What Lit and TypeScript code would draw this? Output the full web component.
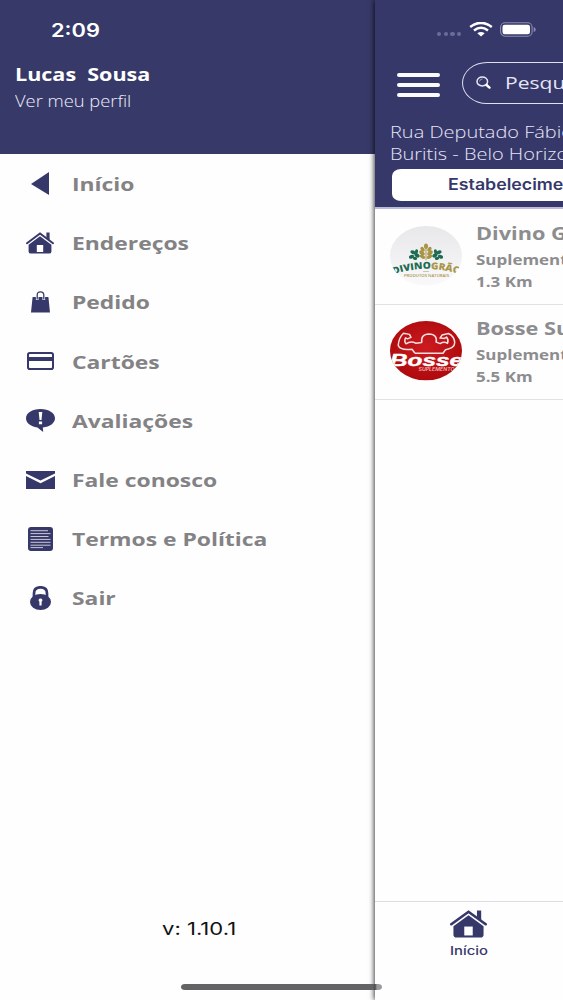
import { LitElement, html, css, svg } from "lit";
import { customElement } from "lit/decorators.js";

const house = html`<svg class="house" viewBox="0 0 28 22" preserveAspectRatio="none">
  <path d="M20.4 .4h3.200v8.500l-3.200-2.800z" fill="#37386a" />
  <path d="M1 11.2 14 1.4 27 11.2" fill="none" stroke="#37386a" stroke-width="2" stroke-linecap="round" />
  <path d="M14 4.2 25.4 12.8V19.4q0 2.2-2.4 2.2H5q-2.4 0-2.4-2.2V12.8z" fill="#37386a" />
  <path d="M10.8 13h6.4v7h-6.4z" fill="#fff" />
</svg>`;

const icons = {
  back: html`<svg class="i-back" viewBox="0 0 18 23"><path d="M18 0v23L0 12z" /></svg>`,
  bag: html`<svg class="i-bag" viewBox="0 0 19 22">
    <path d="M1.6 6h15.8L19 21.6H0z" />
    <path d="M6.2 9V4.2q0-3.4 3.3-3.4t3.3 3.4V9" fill="none" stroke="#fff" stroke-width="2.6" />
    <path d="M6.2 8.6V4.2q0-3.4 3.3-3.4t3.3 3.4V8.6" fill="none" stroke="#37386a" stroke-width="1.3" />
  </svg>`,
  card: html`<svg class="i-card" viewBox="0 0 27 18">
    <rect x="1" y="1" width="25" height="16" rx="1.8" fill="none" stroke="#37386a" stroke-width="2" />
    <path d="M1 5h25v4H1z" />
  </svg>`,
  bubble: html`<svg class="i-bubble" viewBox="0 0 29 23">
    <path d="M14.5 0C22.8 0 29 4 29 9.3c0 4.800-5 8.500-12.200 9.200L17.200 23 11.400 18.400C4.500 17.600 0 14 0 9.300 0 4 6.200 0 14.500 0z" />
    <path d="M12.700 3h3.600l-.8 8h-2zM12.900 12.500h3.200v2.700h-3.200z" fill="#fff" />
  </svg>`,
  mail: html`<svg class="i-mail" viewBox="0 0 29 18">
    <path d="M0 0h29v2.600L14.500 9.600 0 2.600z" />
    <path d="M0 5l14.500 7.200L29 5v13H0z" />
  </svg>`,
  doc: html`<svg class="i-doc" viewBox="0 0 25 24">
    <rect width="25" height="24" rx="3" />
    <path d="M2.500 3.700h17.500M2.500 6.600h20M2.500 9.500h18M2.500 12.400h20M2.500 15.300h20M2.500 18.200h20M2.500 20.600h12.500" stroke="#fff" stroke-opacity=".72" stroke-width="1" />
  </svg>`,
  lock: html`<svg class="i-lock" viewBox="0 0 21 24">
    <path d="M4 12V7.200Q4 1.300 10.500 1.300T17 7.200V12" fill="none" stroke="#37386a" stroke-width="2.700" />
    <ellipse cx="10.500" cy="16" rx="10.500" ry="8" />
    <path d="M10.500 12.600a1.900 1.700 0 0 1 1.100 3.100v3.700H9.400v-3.700a1.900 1.700 0 0 1 1.100-3.100z" fill="#fff" />
  </svg>`,
};

const menu = [
  { icon: icons.back, label: "Início" },
  { icon: house, label: "Endereços" },
  { icon: icons.bag, label: "Pedido" },
  { icon: icons.card, label: "Cartões" },
  { icon: icons.bubble, label: "Avaliações" },
  { icon: icons.mail, label: "Fale conosco" },
  { icon: icons.doc, label: "Termos e Política" },
  { icon: icons.lock, label: "Sair" },
];

const leaf = (x: number, y: number, a: number, rx = 2.4, ry = 1.6) =>
  svg`<ellipse cx=${x} cy=${y} rx=${rx} ry=${ry} transform="rotate(${a} ${x} ${y})" />`;

const divinoLogo = html`<svg class="avatar" viewBox="0 0 72 60" preserveAspectRatio="none">
  <defs>
    <clipPath id="dc"><ellipse cx="36" cy="30" rx="36" ry="30" /></clipPath>
    <linearGradient id="dg" x1="0" y1="0" x2="0" y2="1"><stop offset="0" stop-color="#e8e8eb" /><stop offset="1" stop-color="#f9f9fb" /></linearGradient>
  </defs>
  <g clip-path="url(#dc)">
    <rect width="72" height="60" fill="url(#dg)" />
    <g fill="#a99546">
      ${leaf(36, 20.500, 90, 2.8, 2)}
      ${leaf(32.600, 23.500, 50, 2.700, 1.800)}${leaf(39.400, 23.500, -50, 2.700, 1.800)}
      ${leaf(32, 27.200, 40, 3.200, 1.900)}${leaf(40, 27.200, -40, 3.200, 1.900)}
      ${leaf(32.400, 31, 30, 3, 1.700)}${leaf(39.600, 31, -30, 3, 1.700)}
      <path d="M35.500 22h1v12.500h-1z" />
    </g>
    <g fill="#1d6b52">
      ${leaf(23, 26.500, 20, 2.700, 1.900)}${leaf(26.500, 25.800, 100)}${leaf(21.500, 31, -20, 2.700, 1.800)}${leaf(27, 29.600, 35, 2.8, 1.900)}${leaf(25, 32.600, 10, 2.200)}
      ${leaf(49, 26.500, -20, 2.700, 1.900)}${leaf(45.500, 25.800, 80)}${leaf(50.500, 31, 20, 2.700, 1.800)}${leaf(45, 29.600, -35, 2.8, 1.900)}${leaf(47, 32.600, -10, 2.200)}
    </g>
    <path id="arc" d="M3.500 49Q36 37.500 70.500 49" fill="none" />
    <text font-family="Open Sans, sans-serif" font-weight="800" font-size="9.600" fill="#1d6b52"><textPath href="#arc" textLength="66" lengthAdjust="spacingAndGlyphs">DIVINO<tspan fill="#a99546">GRÃC</tspan></textPath></text>
    <path d="M33 45.900h6" stroke="#b9b08a" stroke-width=".7" />
    <text x="14" y="51.200" textLength="45" lengthAdjust="spacingAndGlyphs" font-family="Open Sans, sans-serif" font-weight="600" font-size="3.300" fill="#a99546">PRODUTOS NATURAIS</text>
  </g>
</svg>`;

const bosseLogo = html`<svg class="avatar" viewBox="0 0 72 60" preserveAspectRatio="none">
  <defs>
    <clipPath id="bc"><ellipse cx="36" cy="30" rx="36" ry="30" /></clipPath>
    <radialGradient id="bg" cx=".5" cy=".45" r=".55"><stop offset="0" stop-color="#cc1b20" /><stop offset="1" stop-color="#ae0a0d" /></radialGradient>
  </defs>
  <g clip-path="url(#bc)">
    <rect width="72" height="60" fill="url(#bg)" />
    <path d="M25 32.500H53L55.500 29Q64.500 27.500 64.700 22 64.500 15.500 58.500 12.600L52 14.200 50 17.200 54.500 17.600 56.500 16.200Q59 19.500 57.500 22.600 54 20.400 50.200 22.800L46.800 21.500M25 32.500 22 28.500Q10 30 8.200 24.500 9 16.500 13.500 12.400L19.500 13.500 21 16.500 17.500 18 15.500 17Q14 21 16 23 21 19.500 26 22.500L31.800 21.600M31.800 22Q30.500 13.300 39 13.100 47.600 13.300 46.200 22" fill="none" stroke="#f6e0e0" stroke-width="1.500" stroke-linejoin="round" />
    <text x="0" y="45.800" textLength="73" lengthAdjust="spacingAndGlyphs" font-family="Liberation Sans, sans-serif" font-weight="700" font-style="italic" font-size="16.500" fill="#fff" stroke="#fff" stroke-width=".4">Bosse</text>
    <text x="28.500" y="50.800" textLength="36" lengthAdjust="spacingAndGlyphs" font-family="Inter, sans-serif" font-weight="600" font-style="italic" font-size="4.400" fill="#f0b8b8">SUPLEMENTO</text>
  </g>
</svg>`;

const stores = [
  { logo: divinoLogo, name: "Divino Grão", kind: "Suplementos", distance: "1.3 Km" },
  { logo: bosseLogo, name: "Bosse Suplementos", kind: "Suplementos", distance: "5.5 Km" },
];

@customElement("app-root")
export class AppRoot extends LitElement {
  static styles = css`
    * { box-sizing: border-box; }
    :host {
      display: flex;
      position: relative;
      width: 563px;
      height: 1000px;
      overflow: hidden;
      background: #fefefe;
      font-family: "Open Sans", sans-serif;
    }
    svg { display: block; }
    .t {
      display: block;
      width: max-content;
      white-space: nowrap;
      transform: scaleX(1.225);
      transform-origin: 0 50%;
    }
    .sf { font-family: Inter, "Liberation Sans", sans-serif; }
    .drawer { width: 375px; flex: none; display: flex; flex-direction: column; }
    .profile { height: 154px; flex: none; background: #373a69; color: #fff; padding: 18px 0 0 14.500px; }
    .time { font-size: 18.500px; line-height: 24px; font-weight: 600; margin-left: 36.500px; transform: scaleX(1.18); }
    .name { font-size: 17.500px; line-height: 24px; font-weight: 700; margin-top: 20.400px; white-space: pre; transform: scaleX(1.23); }
    .see { font-size: 16px; line-height: 24px; font-weight: 300; margin-top: 2.600px; color: #eeeefa; transform: scaleX(1.145); }
    .menu { display: flex; flex-direction: column; flex: 1; }
    .item { height: 59.200px; display: flex; align-items: center; color: #838285; font-size: 18.500px; font-weight: 700; }
    .item .icon { width: 72px; padding-left: 8px; display: flex; justify-content: center; flex: none; }
    .item .t { transform: scaleX(1.235); }
    .icon svg { fill: #37386a; }
    .icon .house { width: 28px; height: 22px; }
    .i-back { width: 18px; height: 23px; }
    .i-bag { width: 19px; height: 22px; }
    .i-card { width: 27px; height: 18px; }
    .i-bubble { width: 29px; height: 23px; }
    .i-mail { width: 29px; height: 18px; }
    .i-doc { width: 25px; height: 24px; }
    .i-lock { width: 21px; height: 24px; }
    .version { font-size: 17.500px; line-height: 24px; color: #111; margin: 0 0 59px 162px; transform: scaleX(1.26); }
    .main {
      flex: none;
      width: 188px;
      background: #fefefe;
      box-shadow: -1px 0 5px rgba(0, 0, 0, 0.75);
      display: flex;
      flex-direction: column;
      overflow: hidden;
    }
    .top { height: 209px; margin-bottom: 1px; flex: none; background: #37386a; color: #e6e6f6; border-bottom: 2px solid #b9bbd8; }
    .status { height: 62px; padding: 22px 0 0 62px; display: flex; }
    .dots { display: flex; gap: 2.500px; padding-top: 10px; width: 32px; }
    .dots i { width: 4.200px; height: 4px; border-radius: 50%; background: #6b6d97; }
    .wifi { width: 24px; height: 15px; }
    .battery { width: 37px; height: 15px; margin-left: 7px; }
    .bar { display: flex; height: 42px; padding-left: 22px; }
    .burger { width: 65px; flex: none; display: flex; flex-direction: column; gap: 5.800px; padding-top: 11.400px; }
    .burger i { width: 43.400px; height: 4px; border-radius: 2px; background: #fbfbff; }
    .search {
      width: 200px; height: 41.500px; flex: none;
      border: 1.500px solid #dfe0f0; border-radius: 25px / 21px;
      display: flex; align-items: center; gap: 13.500px; padding-left: 13px;
      font-size: 17.200px;
    }
    .glass { width: 15px; height: 13px; }
    .address { font-size: 17px; font-weight: 300; line-height: 22.500px; padding: 16.500px 0 0 15px; height: 64.500px; }
    .address .t { transform: scaleX(1.175); }
    .tab {
      width: 300px; height: 32px; margin-left: 17px;
      background: #fff; border-radius: 9px / 7px; color: #37386a;
      font-size: 15.800px; font-weight: 600; line-height: 31.500px; padding-left: 56px;
    }
    .tab .t { transform: scaleX(1.125); }
    .store { height: 95px; flex: none; display: flex; border-bottom: 1px solid #e2e2e5; padding: 16px 0 0 15px; gap: 14px; color: #8d8c8f; font-weight: 700; }
    .avatar { width: 72px; height: 59.500px; flex: none; }
    .title { font-size: 17.800px; line-height: 24px; margin-top: -5px; transform: scaleX(1.22); }
    .sub { font-size: 14.200px; line-height: 21.500px; transform: scaleX(1.195); }
    .info .title + .sub { margin-top: 4px; }
    .nav { margin-top: auto; height: 99px; border-top: 1px solid #dcdce2; padding: 8px 0 0 75px; color: #37386a; }
    .nav .house { width: 37px; height: 28px; }
    .nav .t { font-size: 12.200px; line-height: 16px; margin-top: 5px; font-weight: 500; transform: scaleX(1.215); }
    .home { position: absolute; left: 181px; top: 984px; width: 201px; height: 6px; border-radius: 4px / 3px; background: linear-gradient(90deg, #636365 0 192px, #4a4a4c 194px, #9b9b9d 196px); }
  `;

  render() {
    return html`
      <div class="drawer">
        <div class="profile">
          <span class="t sf time">2:09</span>
          <span class="t name">Lucas  Sousa</span>
          <span class="t see">Ver meu perfil</span>
        </div>
        <nav class="menu">
          ${menu.map((m) => html`<div class="item"><span class="icon">${m.icon}</span><span class="t">${m.label}</span></div>`)}
        </nav>
        <span class="t sf version">v: 1.10.1</span>
      </div>
      <div class="main">
        <div class="top">
          <div class="status">
            <div class="dots"><i></i><i></i><i></i><i></i></div>
            <svg class="wifi" viewBox="0 0 24 15">
              <g fill="none" stroke="#fff" stroke-width="2.500">
                <path d="M1.200 4.900Q12-3.200 22.800 4.900" /><path d="M5 8.500Q12 3 19 8.500" />
              </g>
              <path d="M8.300 11.200Q12 8.600 15.700 11.200L12 14.600z" fill="#fff" />
            </svg>
            <svg class="battery" viewBox="0 0 37 15">
              <rect x=".6" y=".8" width="31.500" height="13.400" rx="4.500" fill="none" stroke="#8b8db0" stroke-width="1.100" />
              <rect x="2.500" y="2.800" width="27.500" height="9.400" rx="2.200" fill="#fff" />
              <path d="M33.700 5q2 .5 2 2.500t-2 2.500z" fill="#8b8db0" />
            </svg>
          </div>
          <div class="bar">
            <div class="burger"><i></i><i></i><i></i></div>
            <div class="search">
              <svg class="glass" viewBox="0 0 15 13">
                <ellipse cx="6.300" cy="5.400" rx="5.300" ry="4.500" fill="none" stroke="#e6e6f6" stroke-width="1.500" />
                <path d="M3.500 5.500Q4 3 6.500 2.900" fill="none" stroke="#b6b7d2" stroke-width=".8" />
                <path d="M10.500 9 13.500 11.600" stroke="#fff" stroke-width="2.400" stroke-linecap="round" />
              </svg>
              <span class="t">Pesquisar</span>
            </div>
          </div>
          <div class="address"><span class="t">Rua Deputado Fábio</span><span class="t">Buritis - Belo Horizonte</span></div>
          <div class="tab"><span class="t sf">Estabelecimentos</span></div>
        </div>
        ${stores.map((s) => html`<div class="store">${s.logo}
          <div class="info"><span class="t title">${s.name}</span><span class="t sub">${s.kind}</span><span class="t sub">${s.distance}</span></div>
        </div>`)}
        <div class="nav">${house}<span class="t sf">Início</span></div>
      </div>
      <div class="home"></div>
    `;
  }
}
